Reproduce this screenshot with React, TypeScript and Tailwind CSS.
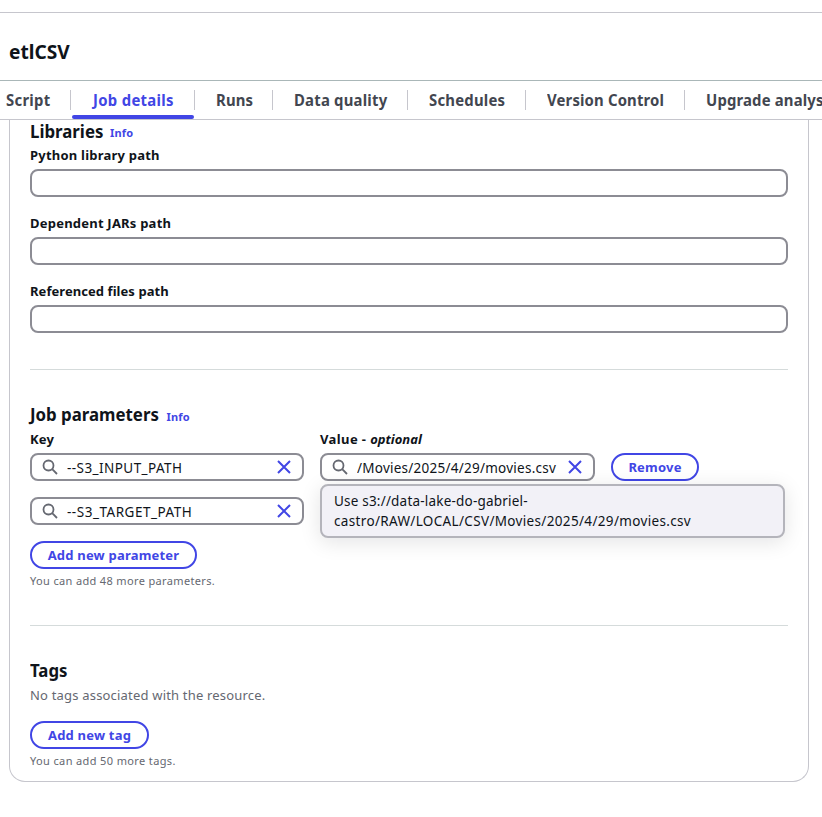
import React from 'react';

const tabs = [
  { label: 'Script', box: 'w-[71px] pl-[6px]', spacing: 'tracking-[0.3px]' },
  { label: 'Job details', box: 'w-[124px] pl-[22px]', spacing: 'tracking-[0.32px]', active: true },
  { label: 'Runs', box: 'w-[78px] pl-[21px]', spacing: 'tracking-[0.17px]' },
  { label: 'Data quality', box: 'w-[135px] pl-[21px]', spacing: 'tracking-[0.22px]' },
  { label: 'Schedules', box: 'w-[118px] pl-[21px]', spacing: 'tracking-[0.24px]' },
  { label: 'Version Control', box: 'w-[159px] pl-[21px]', spacing: 'tracking-[0.17px]' },
  { label: 'Upgrade analysis', box: 'w-[180px] pl-[21px]', spacing: 'tracking-[0.17px]' },
];

function Heading({ children, info, lift = '-mt-px', infoPad = 'pt-[4px]' }: { children: React.ReactNode; info?: string; lift?: string; infoPad?: string }) {
  return (
    <div className="flex h-[24px] items-start">
      <h2 className={info ? `${info} shrink-0` : ''}>
        <span className={`${lift} inline-block origin-left scale-x-[0.935] text-[18px] leading-[24px] font-bold whitespace-nowrap`}>{children}</span>
      </h2>
      {info && <a className={`${infoPad} text-[11px] leading-[20px] font-bold tracking-[0.2px] text-[#4146e5]`}>Info</a>}
    </div>
  );
}

function Label({ children, spacing = 'tracking-[0.22px]' }: { children: React.ReactNode; spacing?: string }) {
  return <div className={`h-[24px] text-[13px] leading-[20px] font-bold ${spacing}`}>{children}</div>;
}

function PathField({ label, spacing }: { label: string; spacing?: string }) {
  return (
    <div className="h-[68px]">
      <Label spacing={spacing}>{label}</Label>
      <div className="h-[28px] rounded-[8px] border-2 border-[#8c8c94]" />
    </div>
  );
}

function SearchField({ width, children, spacing }: { width: string; children: React.ReactNode; spacing: string }) {
  return (
    <div className={`${width} flex h-[28px] shrink-0 items-center rounded-[8px] border-2 border-[#8c8c94] pr-[10px] pl-[10px]`}>
      <svg className="shrink-0" width="16" height="16" viewBox="0 0 16 16" fill="none" stroke="#656871" strokeWidth="1.8">
        <circle cx="6.5" cy="6.5" r="5" />
        <path d="M10.2 10.2 15 15" />
      </svg>
      <div className={`ml-[9px] flex h-[24px] flex-1 overflow-hidden pt-[3px] text-[13.5px] leading-[20px] whitespace-nowrap ${spacing}`}>
        {children}
      </div>
      <svg className="shrink-0" width="16" height="16" viewBox="0 0 16 16" fill="none" stroke="#4146e5" strokeWidth="2">
        <path d="m2 2 12 12M14 2 2 14" />
      </svg>
    </div>
  );
}

function Button({ width, children }: { width: string; children: React.ReactNode }) {
  return (
    <button className={`${width} flex h-[28px] shrink-0 items-center justify-center rounded-full border-2 border-[#4146e5] text-[13px] leading-[20px] font-bold tracking-[0.2px] whitespace-nowrap text-[#4146e5]`}>
      {children}
    </button>
  );
}

export default function App() {
  return (
    <div className="h-[817px] w-[822px] overflow-hidden bg-white pt-[12px] font-['Noto_Sans',sans-serif] text-[#0f141a]">
      <header className="flex h-[68px] items-center border-t border-[#c6c6cd] pt-[11px] pl-[9px]">
        <h1 className="origin-left scale-x-[0.955] text-[20px] leading-[24px] font-bold">etlCSV</h1>
      </header>
      <nav className="flex h-[40px] border-t border-b border-t-[#aab7b8] border-b-[#c6c6cd]">
        {tabs.map((tab, i) => (
          <div key={tab.label} className={`${tab.box} relative h-[38px] shrink-0 pt-[7px]`}>
            <span className={`${tab.spacing} inline-block origin-left scale-x-[0.93] text-[16px] leading-[20px] font-bold whitespace-nowrap ${tab.active ? 'text-[#4146e5]' : 'text-[#424650]'}`}>
              {tab.label}
            </span>
            {i < tabs.length - 1 && <i className="absolute top-[9px] right-0 h-[20px] w-px bg-[#c6c6cd]" />}
            {tab.active && <i className="absolute top-[34px] left-[1px] h-[4px] w-[122px] rounded-full bg-[#4146e5]" />}
          </div>
        ))}
      </nav>
      <main className="ml-[9px] h-[662px] w-[800px] rounded-b-[16px] border border-t-0 border-[#c6c6cd] px-[20px]">
        <section className="h-[249px]">
          <Heading info="w-[80px]" lift="-mt-[2px]" infoPad="pt-[3px]">Libraries</Heading>
          <div className="mt-px">
            <PathField label="Python library path" />
            <PathField label="Dependent JARs path" />
            <PathField label="Referenced files path" spacing="tracking-[0.06px]" />
          </div>
        </section>
        <section className="h-[256px] border-t border-[#d5dbdb] pt-[33px]">
          <Heading info="w-[136.5px]">Job parameters</Heading>
          <div className="relative mt-[2px] flex gap-[16px]">
            <div className="w-[274px]">
              <Label>Key</Label>
              <SearchField width="w-[274px]" spacing="tracking-[0.44px]">--S3_INPUT_PATH</SearchField>
              <div className="h-[16px]" />
              <SearchField width="w-[274px]" spacing="tracking-[0.52px]">--S3_TARGET_PATH</SearchField>
            </div>
            <div className="w-[275px]">
              <Label spacing="tracking-[0.4px]">Value - <em className="tracking-normal">optional</em></Label>
              <SearchField width="w-[275px]" spacing="tracking-[0.25px]">/Movies/2025/4/29/movies.csv</SearchField>
            </div>
            <div className="pt-[24px]">
              <Button width="w-[88px]">Remove</Button>
            </div>
            <div className="absolute top-[55px] left-[290px] h-[54px] w-[465px] rounded-[8px] border-2 border-[#b4b4bb] bg-[#f2f1f7] px-[12px] pt-[5px] text-[13.5px] leading-[20px] shadow-[0_4px_20px_1px_rgba(0,7,22,0.10)]">
              <div className="tracking-[0.2px]">Use s3://data-lake-do-gabriel-</div>
              <div className="tracking-[0.34px]">castro/RAW/LOCAL/CSV/Movies/2025/4/29/movies.csv</div>
            </div>
          </div>
          <div className="h-[16px]" />
          <Button width="w-[167px]">Add new parameter</Button>
          <p className="mt-[4px] text-[11px] leading-[16px] tracking-[0.35px] text-[#656871]">You can add 48 more parameters.</p>
        </section>
        <section className="border-t border-[#d5dbdb] pt-[33px]">
          <Heading>Tags</Heading>
          <p className="mt-[2px] text-[13px] leading-[20px] tracking-[0.19px] text-[#656871]">No tags associated with the resource.</p>
          <div className="h-[16px]" />
          <Button width="w-[119px]">Add new tag</Button>
          <p className="mt-[4px] text-[11px] leading-[16px] tracking-[0.37px] text-[#656871]">You can add 50 more tags.</p>
        </section>
      </main>
    </div>
  );
}
